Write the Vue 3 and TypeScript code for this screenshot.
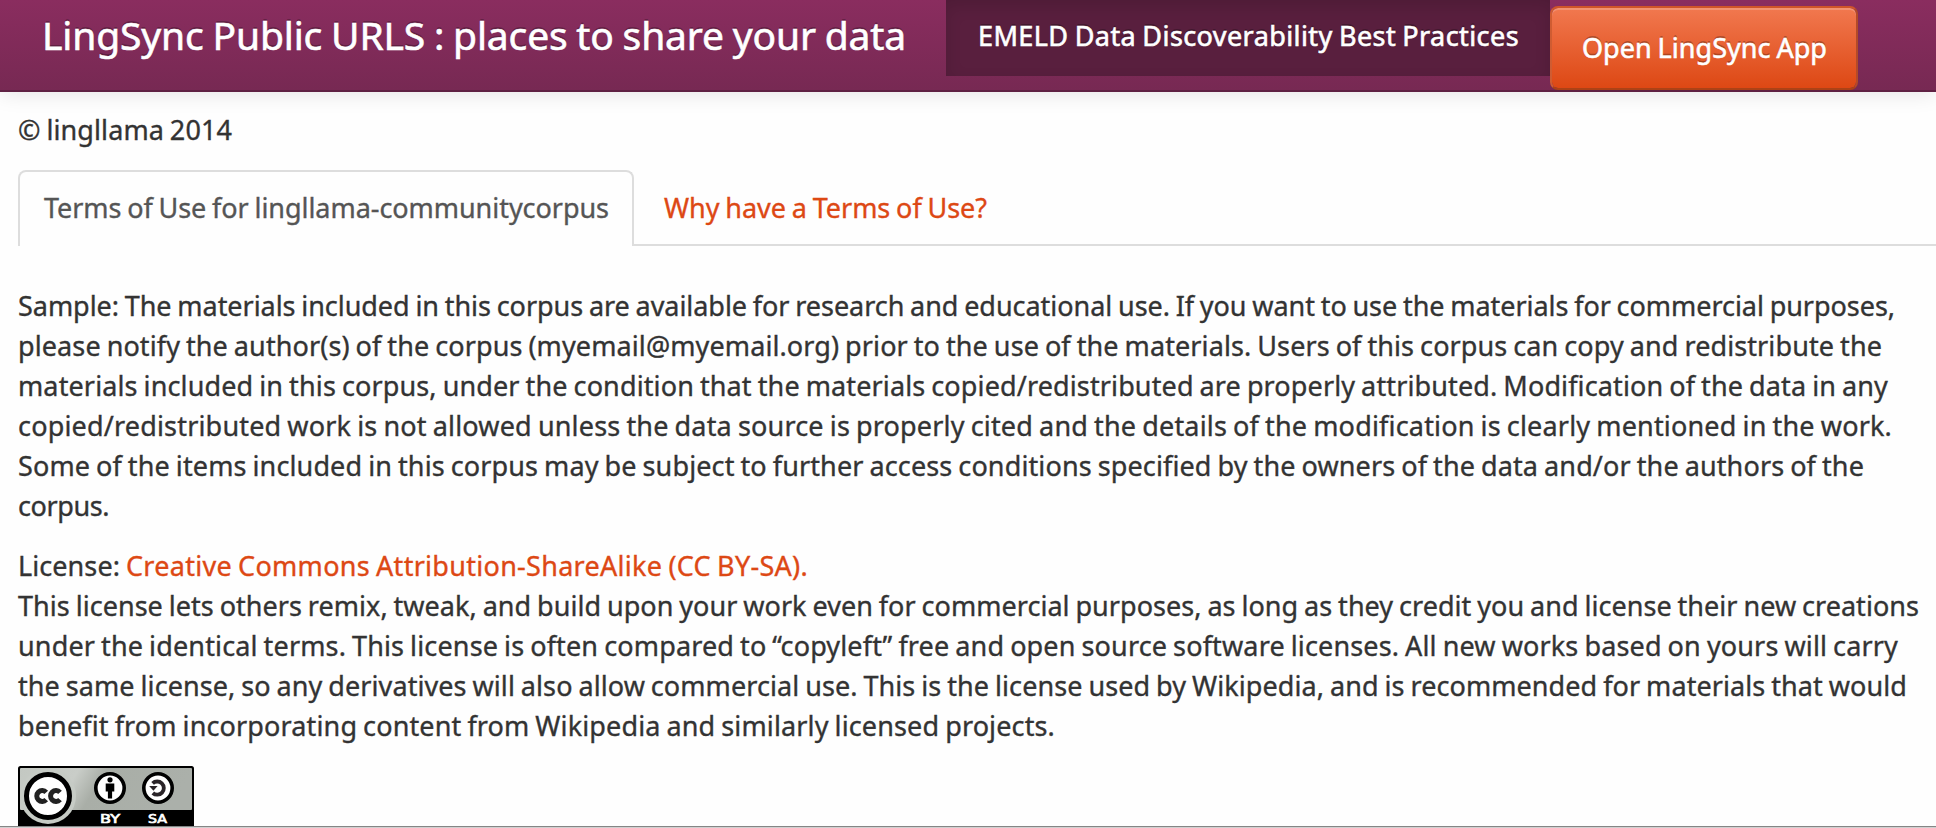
<script setup lang="ts">
import { nextTick, onMounted, ref } from 'vue'

interface Line {
  text: string
  width: number
}

const terms: Line[] = [
  { text: 'Sample: The materials included in this corpus are available for research and educational use. If you want to use the materials for commercial purposes,', width: 1877 },
  { text: 'please notify the author(s) of the corpus (myemail@myemail.org) prior to the use of the materials. Users of this corpus can copy and redistribute the', width: 1864 },
  { text: 'materials included in this corpus, under the condition that the materials copied/redistributed are properly attributed. Modification of the data in any', width: 1870 },
  { text: 'copied/redistributed work is not allowed unless the data source is properly cited and the details of the modification is clearly mentioned in the work.', width: 1874 },
  { text: 'Some of the items included in this corpus may be subject to further access conditions specified by the owners of the data and/or the authors of the', width: 1846 },
  { text: 'corpus.', width: 91 },
]

const license: Line[] = [
  { text: 'This license lets others remix, tweak, and build upon your work even for commercial purposes, as long as they credit you and license their new creations', width: 1901 },
  { text: 'under the identical terms. This license is often compared to “copyleft” free and open source software licenses. All new works based on yours will carry', width: 1880 },
  { text: 'the same license, so any derivatives will also allow commercial use. This is the license used by Wikipedia, and is recommended for materials that would', width: 1889 },
  { text: 'benefit from incorporating content from Wikipedia and similarly licensed projects.', width: 1037 },
]

const root = ref<HTMLElement | null>(null)

// Tracks each run of text so that it fills its measure exactly.
function fitText(): void {
  root.value?.querySelectorAll<HTMLElement>('[data-width]').forEach((el) => {
    el.style.letterSpacing = '0px'
    const natural = el.getBoundingClientRect().width
    const count = (el.textContent ?? '').length
    el.style.letterSpacing = `${(Number(el.dataset.width) - natural) / count}px`
  })
}

onMounted(async () => {
  await nextTick()
  fitText()
})
</script>

<template>
  <div ref="root" class="page">
    <header class="navbar">
      <a class="brand"><span class="fit" data-width="864">LingSync Public URLS : places to share your data</span></a>
      <a class="nav-active"><span class="fit" data-width="541">EMELD Data Discoverability Best Practices</span></a>
      <a class="btn"><span class="fit" data-width="245">Open LingSync App</span></a>
    </header>

    <main class="content">
      <p class="copyright"><span class="fit" data-width="214">© lingllama 2014</span></p>

      <nav class="tabs">
        <a class="tab tab-active"><span class="fit" data-width="565">Terms of Use for lingllama-communitycorpus</span></a>
        <a class="tab tab-link"><span class="fit" data-width="323">Why have a Terms of Use?</span></a>
      </nav>

      <div class="paragraph">
        <div v-for="line in terms" :key="line.text" class="line">
          <span class="fit" :data-width="line.width">{{ line.text }}</span>
        </div>
      </div>

      <div class="paragraph license">
        <div class="line license-head">
          <span class="fit" data-width="102">License:</span>
          <a class="fit link" data-width="682">Creative Commons Attribution-ShareAlike (CC BY-SA).</a>
        </div>
        <div v-for="line in license" :key="line.text" class="line">
          <span class="fit" :data-width="line.width">{{ line.text }}</span>
        </div>
      </div>

      <svg class="badge" width="176" height="62" viewBox="0 0 176 62">
        <defs>
          <linearGradient id="plate" x1="0" x2="1" y1="0" y2="0.15">
            <stop offset="0" stop-color="#c3c8c2" />
            <stop offset="0.34" stop-color="#c9cdc8" />
            <stop offset="0.5" stop-color="#a9aea7" />
            <stop offset="1" stop-color="#abb0aa" />
          </linearGradient>
        </defs>
        <rect width="176" height="64" rx="2.5" fill="#000" />
        <rect x="2" y="2" width="172" height="42" rx="1" fill="url(#plate)" />
        <circle cx="30" cy="30" r="28" fill="#c6cbc5" />
        <circle cx="30" cy="30" r="21.5" fill="#fff" stroke="#000" stroke-width="5" />
        <g fill="none" stroke="#222" stroke-width="5">
          <path d="M28.2 26.4A5.4 5.4 0 1 0 28.2 33.6" />
          <path d="M42 26.4A5.4 5.4 0 1 0 42 33.6" />
        </g>
        <circle cx="92" cy="22" r="14.2" fill="#fff" stroke="#000" stroke-width="3.6" />
        <circle cx="92" cy="13.8" r="2.6" />
        <path d="M87.7 17.5h8.6v8h-2.2v7h-4.2v-7h-2.2z" />
        <circle cx="140" cy="22" r="14.2" fill="#fff" stroke="#000" stroke-width="3.6" />
        <path d="M134.6 17.4A6.6 6.6 0 1 1 134.8 27" fill="none" stroke="#2a2428" stroke-width="3.8" />
        <path d="M131.2 20h8.4l-4.2 4.8z" fill="#2a2428" />
        <text x="82" y="57.4" textLength="20" lengthAdjust="spacingAndGlyphs">BY</text>
        <text x="130" y="57.4" textLength="19" lengthAdjust="spacingAndGlyphs">SA</text>
      </svg>
    </main>
    <div class="bottom-edge"></div>
  </div>
</template>

<style>
body {
  overflow: hidden;
}
</style>

<style scoped>
.page {
  display: flex;
  flex-direction: column;
  box-sizing: border-box;
  width: 1936px;
  height: 828px;
  overflow: hidden;
  background: #fefefe;
  color: #333;
  font: 27px/40px 'Noto Sans', 'Open Sans', sans-serif;
  white-space: nowrap;
  word-spacing: -1.2px;
  -webkit-text-stroke: 0.35px currentColor;
}

.fit {
  display: inline-block;
}

.navbar {
  display: flex;
  align-items: flex-start;
  flex: none;
  box-sizing: border-box;
  height: 92px;
  border-bottom: 2px solid #5f2143;
  background: linear-gradient(#8a2d5f, #772953);
  box-shadow: 0 2px 20px rgba(0, 0, 0, 0.1);
  color: #fff;
  text-shadow: 0 -2px 0 rgba(0, 0, 0, 0.25);
  -webkit-text-stroke-width: 0.6px;
}

.brand {
  box-sizing: border-box;
  width: 946px;
  padding: 15px 0 0 42px;
  font-size: 39px;
}

.nav-active {
  box-sizing: border-box;
  width: 604px;
  height: 76px;
  padding: 16px 0 0 32px;
  background: #591f3e;
  box-shadow: inset 0 6px 16px rgba(0, 0, 0, 0.125);
}

.btn {
  box-sizing: border-box;
  width: 308px;
  height: 84px;
  margin-top: 6px;
  padding: 20px 0 0 30px;
  border: 2px solid;
  border-color: #cf5429 #b34a28 #ac4216 #cf5c32;
  border-radius: 8px;
  background: linear-gradient(#f1784f, #dd4814) padding-box;
  box-shadow: inset 0 2px 0 rgba(255, 255, 255, 0.2);
}

.content {
  flex: none;
  height: 734px;
  padding-left: 18px;
  overflow: hidden;
  box-sizing: border-box;
}

/* The header's shadow falls over the top of the content. */
.navbar {
  z-index: 1;
}

.copyright {
  margin: 18px 0 20px;
}

.tabs {
  display: flex;
  box-sizing: border-box;
  height: 76px;
  border-bottom: 2px solid #ddd;
}

.tab {
  box-sizing: border-box;
  height: 76px;
  padding-top: 16px;
  border: 2px solid transparent;
  border-bottom: 0;
}

.tab-active {
  width: 616px;
  padding-left: 24px;
  border-color: #ddd;
  border-radius: 8px 8px 0 0;
  background: #fefefe;
  color: #555;
}

.tab-link {
  padding-left: 28px;
}

.tab-link,
.link {
  color: #dd4814;
}

.paragraph {
  margin-top: 40px;
}

.paragraph.license {
  margin-top: 20px;
}

.line {
  display: flex;
  height: 40px;
}

.license-head {
  gap: 6px;
}

.badge {
  display: block;
  margin-top: 20px;
  -webkit-text-stroke-width: 0;
}

.badge text {
  fill: #fff;
  font: 400 12.5px 'DejaVu Sans', sans-serif;
  stroke: #fff;
  stroke-width: 0.7px;
}

.bottom-edge {
  flex: none;
  height: 2px;
  background: linear-gradient(#858585 50%, #d0d0d0 50%);
}
</style>
